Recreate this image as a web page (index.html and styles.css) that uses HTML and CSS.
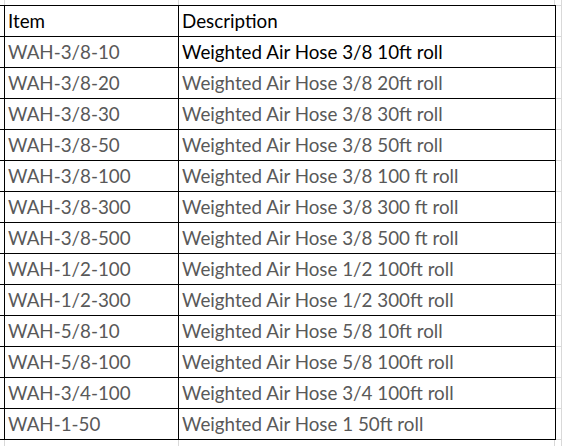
FILE: index.html
```html
<!DOCTYPE html>
<html>
<head>
<meta charset="utf-8">
<link rel="stylesheet" href="styles.css">
</head>
<body>
<div class="sheet">
<table class="items">
<colgroup><col class="c-item"><col class="c-desc"></colgroup>
<tr class="head"><td>Item</td><td>Description</td></tr>
<tr><td>WAH-3/8-10</td><td class="dark">Weighted Air Hose 3/8 10ft roll</td></tr>
<tr><td>WAH-3/8-20</td><td>Weighted Air Hose 3/8 20ft roll</td></tr>
<tr><td>WAH-3/8-30</td><td>Weighted Air Hose 3/8 30ft roll</td></tr>
<tr><td>WAH-3/8-50</td><td>Weighted Air Hose 3/8 50ft roll</td></tr>
<tr><td>WAH-3/8-100</td><td>Weighted Air Hose 3/8 100 ft roll</td></tr>
<tr><td>WAH-3/8-300</td><td>Weighted Air Hose 3/8 300 ft roll</td></tr>
<tr><td>WAH-3/8-500</td><td>Weighted Air Hose 3/8 500 ft roll</td></tr>
<tr><td>WAH-1/2-100</td><td>Weighted Air Hose 1/2 100ft roll</td></tr>
<tr><td>WAH-1/2-300</td><td>Weighted Air Hose 1/2 300ft roll</td></tr>
<tr><td>WAH-5/8-10</td><td>Weighted Air Hose 5/8 10ft roll</td></tr>
<tr><td>WAH-5/8-100</td><td>Weighted Air Hose 5/8 100ft roll</td></tr>
<tr><td>WAH-3/4-100</td><td>Weighted Air Hose 3/4 100ft roll</td></tr>
<tr><td>WAH-1-50</td><td>Weighted Air Hose 1 50ft roll</td></tr>
</table>
</div>
</body>
</html>
```
FILE: styles.css
```css
html, body {
  margin: 0;
  padding: 0;
  background: #fff;
}
.sheet {
  width: 562px;
  height: 446px;
  padding: 5px 0 0 4px;
  box-sizing: border-box;
  background:
    linear-gradient(to bottom, #000 1px, transparent 1px) 0 36px / 4px 31px repeat-y,
    linear-gradient(to right, #d9d9d9 1px, transparent 1px) 4px 0 / 1px 100% no-repeat,
    linear-gradient(to right, #d9d9d9 1px, transparent 1px) 178px 0 / 1px 100% no-repeat,
    linear-gradient(to right, #d9d9d9 1px, transparent 1px) 554px 0 / 1px 100% no-repeat,
    linear-gradient(to right, #d9d9d9 1px, transparent 1px) 561px 0 / 1px 100% no-repeat,
    linear-gradient(to bottom, #d9d9d9 1px, transparent 1px) 0 5px / 100% 31px repeat-y,
    #fff;
}
.items {
  border-collapse: collapse;
  background: #fff;
  width: 551px;
  table-layout: fixed;
  font-family: Lato, "Open Sans", sans-serif;
  font-size: 18.8px;
  color: #595959;
}
.c-item { width: 174px; }
.c-desc { width: 377px; }
.items td {
  border: 1px solid #000;
  height: 31px;
  padding: 0 4px 4px 3px;
  box-sizing: border-box;
  vertical-align: bottom;
  line-height: 22px;
  white-space: nowrap;
}
.items .head td,
.items td.dark {
  color: #000;
}
```
